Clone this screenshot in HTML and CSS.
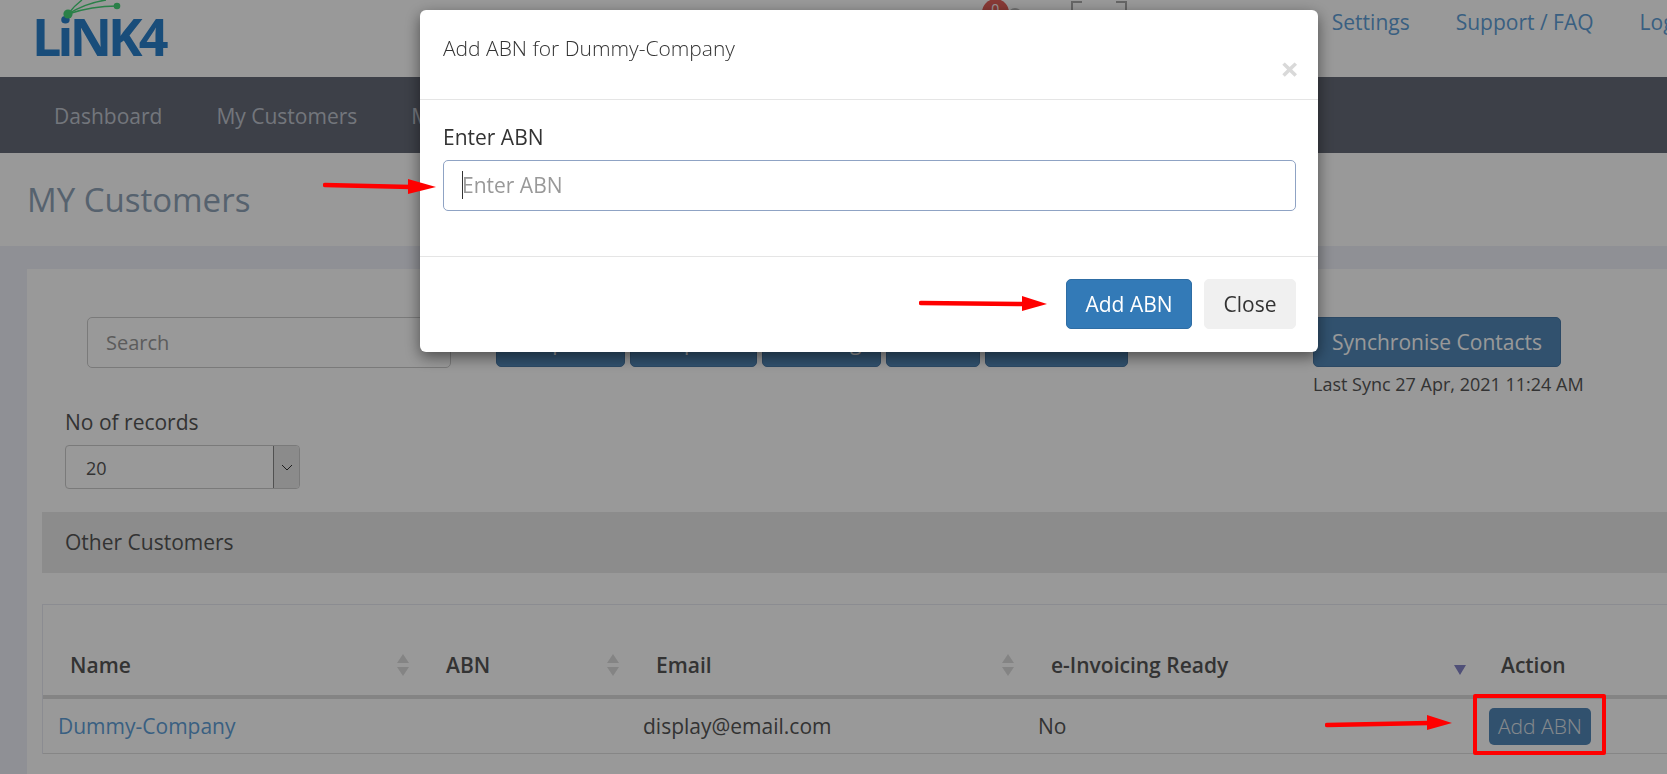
FILE: index.html
```html
<!DOCTYPE html>
<html lang="en">
<head>
    <meta charset="UTF-8">
    <meta name="viewport" content="width=device-width, initial-scale=1.0">
    <title>My Customers</title>
    <link rel="stylesheet" href="styles.css">
</head>
<body>

<header class="top-bar">
    <div class="logo">
        <span class="logo-text">LiNK4</span>
        <svg class="logo-mark" width="100" height="24" viewBox="0 0 100 24">
            <g fill="none" stroke="#46d578" stroke-width="1.4">
                <path d="M32 14 Q38 6 46 0"/>
                <path d="M32 14 Q50 3 70 0"/>
                <path d="M32 14 Q56 6 81 6"/>
            </g>
            <circle cx="32" cy="14" r="4.6" fill="#46d578"/>
            <circle cx="81" cy="6" r="3.3" fill="#46d578"/>
        </svg>
    </div>
    <div class="top-icons">
        <span class="badge">0</span>
        <span class="bell"></span>
        <span class="bracket bracket-left"></span>
        <span class="bracket bracket-right"></span>
    </div>
    <nav class="top-links">
        <a href="#">Settings</a>
        <a href="#">Support / FAQ</a>
        <a href="#">Logout</a>
    </nav>
</header>

<nav class="main-nav">
    <a href="#">Dashboard</a>
    <a href="#">My Customers</a>
    <a href="#">My Suppliers</a>
</nav>

<div class="title-band">
    <h1>MY Customers</h1>
</div>

<main class="content">
    <section class="card">
        <div class="toolbar">
            <input class="search-input" type="text" placeholder="Search">
            <div class="toolbar-buttons">
                <button class="btn">Import</button>
                <button class="btn">Export</button>
                <button class="btn">Pending</button>
                <button class="btn">Send</button>
                <button class="btn">Refresh</button>
            </div>
            <div class="sync-box">
                <button class="btn sync-button">Synchronise Contacts</button>
                <div class="last-sync">Last Sync 27 Apr, 2021 11:24 AM</div>
            </div>
        </div>

        <div class="records">
            <label>No of records</label>
            <div class="records-select">
                <span class="records-value">20</span>
                <span class="records-arrow">
                    <svg width="12" height="7" viewBox="0 0 12 7"><path d="M1 1l5 5 5-5" fill="none" stroke="#333" stroke-width="1"/></svg>
                </span>
            </div>
        </div>

        <div class="section-band">Other Customers</div>

        <div class="table-wrap">
            <table class="customers">
                <colgroup>
                    <col class="col-name">
                    <col class="col-abn">
                    <col class="col-email">
                    <col class="col-ready">
                    <col class="col-action">
                </colgroup>
                <thead>
                    <tr>
                        <th><div class="th-inner">Name<svg class="sort" width="12" height="22" viewBox="0 0 12 22"><path d="M6 0l6 9H0zM6 22L0 13h12z"/></svg></div></th>
                        <th><div class="th-inner">ABN<svg class="sort" width="12" height="22" viewBox="0 0 12 22"><path d="M6 0l6 9H0zM6 22L0 13h12z"/></svg></div></th>
                        <th><div class="th-inner">Email<svg class="sort" width="12" height="22" viewBox="0 0 12 22"><path d="M6 0l6 9H0zM6 22L0 13h12z"/></svg></div></th>
                        <th><div class="th-inner">e-Invoicing Ready<svg class="sort-active" width="12" height="10" viewBox="0 0 12 10"><path d="M0 0h12L6 10z"/></svg></div></th>
                        <th>Action</th>
                    </tr>
                </thead>
                <tbody>
                    <tr>
                        <td><a href="#">Dummy-Company</a></td>
                        <td></td>
                        <td>display@email.com</td>
                        <td>No</td>
                        <td><button class="btn btn-small">Add ABN</button></td>
                    </tr>
                </tbody>
            </table>
        </div>
    </section>
</main>

<div class="backdrop"></div>

<div class="modal">
    <div class="modal-header">
        <h4>Add ABN for Dummy-Company</h4>
        <span class="modal-close">&times;</span>
    </div>
    <div class="modal-body">
        <label for="abn">Enter ABN</label>
        <div class="abn-field">
            <input id="abn" type="text" placeholder="Enter ABN">
            <span class="caret"></span>
        </div>
    </div>
    <div class="modal-footer">
        <button class="modal-btn modal-primary">Add ABN</button>
        <button class="modal-btn modal-default">Close</button>
    </div>
</div>

<!-- annotations -->
<svg class="arrow arrow-input" width="114" height="16" viewBox="0 0 114 16"><path d="M2 6L88 8" stroke="#f00" stroke-width="4.5" stroke-linecap="round"/><path d="M85 0l28 8-28 7z" fill="#f00"/></svg>
<svg class="arrow arrow-submit" width="130" height="16" viewBox="0 0 130 16"><path d="M2 7L105 8" stroke="#f00" stroke-width="4.5" stroke-linecap="round"/><path d="M103 0l25 8-25 7z" fill="#f00"/></svg>
<svg class="arrow arrow-row" width="128" height="16" viewBox="0 0 128 16"><path d="M2 10L104 8" stroke="#f00" stroke-width="4.5" stroke-linecap="round"/><path d="M102 0l25 8-25 7z" fill="#f00"/></svg>
<div class="red-box"></div>

</body>
</html>
```

FILE: styles.css
```css
html, body {
    height: 100%;
}

body {
    margin: 0;
    padding: 0;
    overflow: hidden;
    font-family: "Open Sans", sans-serif;
    font-size: 21px;
    color: #555;
    background-color: #eef0f8;
}

a {
    text-decoration: none;
}

button {
    font-family: inherit;
}

.top-bar {
    display: flex;
    height: 77px;
    background-color: white;
}

.logo {
    position: relative;
    width: 135px;
    margin-left: 32px;
}

.logo-text {
    display: block;
    margin-top: 17px;
    font-size: 52px;
    line-height: 38px;
    font-weight: 700;
    letter-spacing: -3.8px;
    color: #2b80cb;
}

.logo-mark {
    position: absolute;
    top: 0;
    left: 4px;
}

.top-icons {
    display: flex;
    margin-left: 817px;
}

.badge {
    width: 27px;
    height: 27px;
    border-radius: 50%;
    background-color: #e2605a;
    color: white;
    font-size: 14px;
    line-height: 20px;
    text-align: center;
    margin-top: -1px;
}

.bell {
    width: 10px;
    height: 10px;
    margin-top: 8px;
    border: 2px solid #bbb;
    border-radius: 50%;
    margin-left: -1px;
}

.bracket {
    width: 9px;
    height: 14px;
    margin-top: 1px;
    border-top: 2px solid #aaa;
}

.bracket-left {
    margin-left: 49px;
    border-left: 2px solid #aaa;
}

.bracket-right {
    margin-left: 34px;
    border-right: 2px solid #aaa;
}

.top-links {
    display: flex;
    gap: 46px;
    margin-left: 205px;
    padding-top: 10px;
    white-space: nowrap;
}

.top-links a {
    color: #5f9fd8;
    line-height: 24px;
}

.main-nav {
    display: flex;
    gap: 54px;
    height: 76px;
    padding-left: 54px;
    align-items: center;
    background-color: #666b78;
    white-space: nowrap;
}

.main-nav a {
    color: #c0c5cf;
    line-height: 28px;
    padding-top: 1px;
}

.title-band {
    height: 93px;
    display: flex;
    align-items: center;
    padding-left: 27px;
    background-color: white;
}

h1 {
    margin: 0;
    font-size: 33px;
    font-weight: 400;
    color: #8fa3b8;
}

.content {
    padding: 23px 0 0 27px;
}

.card {
    width: 1700px;
    height: 600px;
    padding-top: 48px;
    background-color: white;
}

.toolbar {
    display: flex;
    margin-left: 60px;
}

.search-input {
    width: 364px;
    height: 51px;
    box-sizing: border-box;
    padding: 0 18px;
    border: 1px solid #ccc;
    border-radius: 5px;
    font-family: inherit;
    font-size: 20px;
}

.search-input::placeholder {
    color: #999;
}

.toolbar-buttons {
    display: grid;
    grid-template-columns: 129px 127px 119px 94px 143px;
    column-gap: 5px;
    margin-left: 45px;
}

.btn {
    height: 50px;
    padding: 0 18px;
    border: 1px solid #4a7aa8;
    border-radius: 5px;
    background-color: #5288b8;
    color: white;
    font-size: 21px;
}

.sync-box {
    margin-left: 185px;
}

.sync-button {
    width: 248px;
    padding: 0;
}

.last-sync {
    margin-top: 4px;
    font-size: 18px;
    line-height: 26px;
    white-space: nowrap;
}

.records {
    margin: 13px 0 0 38px;
}

.records label {
    display: block;
    line-height: 24px;
}

.records-select {
    display: flex;
    width: 235px;
    height: 44px;
    box-sizing: border-box;
    margin-top: 11px;
    border: 1px solid #ccc;
    border-radius: 4px;
}

.records-value {
    flex: 1;
    padding-left: 20px;
    font-size: 18px;
    line-height: 44px;
}

.records-arrow {
    display: flex;
    align-items: center;
    justify-content: center;
    width: 25px;
    background-color: #e8e8e8;
    border-left: 1px solid #888;
    border-radius: 0 3px 3px 0;
}

.section-band {
    height: 61px;
    margin: 23px 0 0 15px;
    padding-left: 23px;
    line-height: 61px;
    background-color: #eaeaea;
}

.table-wrap {
    margin: 31px 0 0 15px;
    border: solid #e8eaf2;
    border-width: 1px 0 0 1px;
}

.customers {
    table-layout: fixed;
    border-collapse: separate;
    border-spacing: 0;
    width: 1680px;
}

.col-name { width: 374px; }
.col-abn { width: 210px; }
.col-email { width: 395px; }
.col-ready { width: 450px; }

.customers th {
    height: 94px;
    box-sizing: border-box;
    padding: 48px 0 0 29px;
    border-bottom: 4px solid #ddd;
    text-align: left;
    font-weight: 600;
    line-height: 24px;
    vertical-align: top;
    white-space: nowrap;
}

.customers th:first-child {
    padding-left: 27px;
}

.th-inner {
    display: flex;
    justify-content: space-between;
    align-items: center;
    padding-right: 8px;
    height: 24px;
}

.sort {
    fill: #ddd;
}

.sort-active {
    fill: #8585c8;
    margin: 10px -2px 0 0;
}

.customers td {
    height: 55px;
    box-sizing: border-box;
    padding: 0 0 0 16px;
    border-bottom: 1px solid #e0e0e0;
    white-space: nowrap;
}

.customers td:first-child {
    padding-left: 15px;
}

.customers td:last-child {
    padding-left: 17px;
}

.customers td a {
    color: #5f9fd8;
}

.btn-small {
    display: block;
    width: 102px;
    height: 37px;
    padding: 0;
    border: none;
    font-weight: 300;
    color: #e0e6ec;
}

.backdrop {
    position: fixed;
    inset: 0;
    background-color: rgba(0, 0, 0, 0.4);
}

.modal {
    position: fixed;
    top: 10px;
    left: 420px;
    width: 898px;
    height: 342px;
    border-radius: 6px;
    background-color: white;
    box-shadow: 0 5px 15px rgba(0, 0, 0, 0.5);
    color: #333;
}

.modal-header {
    position: relative;
    height: 89px;
    padding-left: 23px;
    border-bottom: 1px solid #e5e5e5;
}

.modal-header h4 {
    margin: 0;
    padding-top: 24px;
    font-size: 21px;
    line-height: 28px;
    font-weight: 300;
}

.modal-close {
    position: absolute;
    right: 19px;
    top: 39px;
    font-size: 33px;
    line-height: 40px;
    font-weight: 700;
    color: #d9d9d9;
}

.modal-body {
    height: 157px;
    padding: 25px 22px 0 23px;
    box-sizing: border-box;
    border-bottom: 1px solid #e5e5e5;
}

.modal-body label {
    display: block;
    line-height: 24px;
}

.abn-field {
    position: relative;
    margin-top: 11px;
}

.abn-field input {
    display: block;
    width: 100%;
    height: 51px;
    box-sizing: border-box;
    padding: 0 18px 2px;
    border: 1px solid #8fa3c4;
    border-radius: 5px;
    font-family: inherit;
    font-size: 21px;
    outline: none;
}

.abn-field input::placeholder {
    color: #999;
}

.caret {
    position: absolute;
    left: 19px;
    top: 11px;
    width: 1px;
    height: 28px;
    background-color: #333;
}

.modal-footer {
    display: flex;
    justify-content: flex-end;
    gap: 12px;
    padding: 22px 22px 0 0;
}

.modal-btn {
    height: 50px;
    padding: 0;
    border-radius: 5px;
    font-size: 21px;
}

.modal-primary {
    width: 126px;
    background-color: #337ab7;
    border: 1px solid #2e6da4;
    color: white;
}

.modal-default {
    width: 92px;
    background-color: #f0f0f0;
    border: 1px solid #f0f0f0;
    color: #333;
}

.arrow {
    position: fixed;
}

.arrow-input {
    left: 323px;
    top: 179px;
}

.arrow-submit {
    left: 919px;
    top: 296px;
}

.arrow-row {
    left: 1325px;
    top: 715px;
}

.red-box {
    position: fixed;
    left: 1473px;
    top: 694px;
    width: 125px;
    height: 53px;
    border: 4px solid #f00;
    border-radius: 2px;
}
```
